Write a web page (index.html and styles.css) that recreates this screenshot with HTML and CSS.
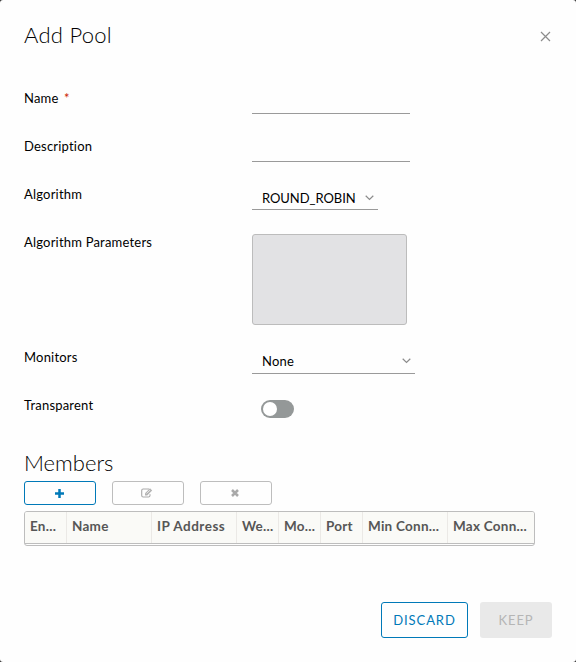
FILE: index.html
```html
<!DOCTYPE html>
<html lang="en">
<head>
<meta charset="utf-8">
<title>Add Pool</title>
<link rel="stylesheet" href="styles.css">
</head>
<body>
<main class="modal">
  <header class="modal-header">
    <h1 class="title">Add Pool</h1>
    <button class="close" aria-label="Close"><svg width="11" height="11" viewBox="0 0 11 11"><path d="M1 1 10 10M10 1 1 10"/></svg></button>
  </header>
  <form class="form">
    <div class="row"><label>Name <span class="required">*</span></label><input class="field" type="text"></div>
    <div class="row"><label>Description</label><input class="field" type="text"></div>
    <div class="row"><label>Algorithm</label><div class="select select-short"><span class="caps">ROUND_ROBIN</span><svg width="9" height="6" viewBox="0 0 9 6"><path d="M.7.8 4.5 4.5 8.3.8"/></svg></div></div>
    <div class="row row-tall"><label>Algorithm Parameters</label><textarea class="params" disabled></textarea></div>
    <div class="row"><label>Monitors</label><div class="select"><span>None</span><svg width="9" height="6" viewBox="0 0 9 6"><path d="M.7.8 4.5 4.5 8.3.8"/></svg></div></div>
    <div class="row"><label>Transparent</label><div class="toggle"><div class="knob"></div></div></div>
  </form>
  <section class="members">
    <h2 class="title">Members</h2>
    <div class="tools">
      <button type="button" class="tool tool-add" aria-label="Add"><svg width="9" height="9" viewBox="0 0 9 9"><path d="M4.5 0v9M0 4.5h9"/></svg></button>
      <button type="button" class="tool" disabled aria-label="Edit"><svg class="edit" width="12" height="10" viewBox="0 0 12 10"><path d="M8 1H2.2Q.7 1 .7 2.4v5.2Q.7 9 2.2 9h5.2Q9 9 9 7.6V6.3"/><path class="pencil" d="M4 5.3 9 .3 11.2 2.5 6.2 7.5H4z"/><path class="shine" d="M5.6 5.5 9 2.1"/></svg></button>
      <button type="button" class="tool" disabled aria-label="Delete"><svg width="8" height="8" viewBox="0 0 8 8"><path d="M1 1 7 7M7 1 1 7"/></svg></button>
    </div>
    <div class="grid">
      <div class="grid-head">
        <span>En...</span><span>Name</span><span class="wide">IP Address</span><span>We...</span><span>Mo...</span><span>Port</span><span>Min Conn...</span><span>Max Conn...</span>
      </div>
    </div>
  </section>
  <footer class="actions">
    <button class="button discard">DISCARD</button>
    <button class="button keep" disabled>KEEP</button>
  </footer>
</main>
</body>
</html>
```
FILE: styles.css
```css
* { box-sizing: border-box; }
body { margin: 0; background: #313131; font-family: Lato, "Liberation Sans", sans-serif; color: #000; }
button { margin: 0; padding: 0; font-family: inherit; background: none; border: 0; }
svg { display: block; fill: none; stroke: #8c8c8c; stroke-width: 1.2; }
.modal { width: 576px; height: 662px; padding: 24px; background: #fefefe; border-radius: 3px; display: flex; flex-direction: column; }
.modal-header { display: flex; justify-content: space-between; height: 61px; }
.title { margin: 0; font-size: 22px; font-weight: 300; line-height: 24px; letter-spacing: .15px; }
.modal-header .title { line-height: 22px; letter-spacing: .25px; }
.members .title { letter-spacing: 0; }
.close { width: 13px; height: 25px; display: flex; align-items: center; justify-content: center; }
.form { display: flex; flex-direction: column; }
.row { display: grid; grid-template-columns: 228px auto; justify-content: start; align-items: start; height: 48px; }
.row-tall { height: 115px; }
label { font-size: 13px; line-height: 27px; letter-spacing: .2px; }
.required { color: #c92100; margin-left: 2px; }
.field { width: 158px; height: 29px; padding: 0; border: 0; border-bottom: 1px solid #9a9a9a; background: transparent; outline: 0; }
.select { width: 163px; height: 30px; padding: 5px 4px 0 10px; border-bottom: 1px solid #9a9a9a; display: flex; justify-content: space-between; align-items: center; font-size: 13px; line-height: 20px; letter-spacing: .2px; }
.select-short { width: 126px; height: 29px; }
.caps { letter-spacing: -.05px; }
.params { width: 155px; height: 91px; margin-top: 5px; border: 1px solid #bcbcbc; border-radius: 3px; background: #e2e2e4; resize: none; }
.toggle { width: 33px; height: 18px; margin: 8px 0 0 9px; padding: 2px; border-radius: 9px; background: #949898; }
.knob { width: 14px; height: 14px; border-radius: 50%; background: #fff; }
.members { padding-top: 11px; }
.tools { display: flex; gap: 16px; margin-top: 6px; }
.tool { width: 72px; height: 24px; padding-right: 2px; border: 1px solid #bdbdbd; border-radius: 3px; display: flex; align-items: center; justify-content: center; }
.tool svg { stroke: #a9a9a9; stroke-width: 2.5; }
.tool .edit { stroke-width: 1.1; }
.edit .pencil { fill: #b3b3b3; stroke: none; }
.edit .shine { stroke: #fff; stroke-width: .7; }
.tool-add { padding-right: 1px; border-color: #0079b8; }
.tool-add svg { stroke: #0079b8; }
.grid { width: 511px; height: 35px; margin-top: 6px; border: 1px solid #bdbdbd; border-radius: 3px; }
.grid-head { height: 32px; display: grid; grid-template-columns: 42px 85px 85px 42px 42px 42px 85px 86px; border-bottom: 1px solid #bdbdbd; background: #fafaf7; border-radius: 2px 2px 0 0; }
.grid-head span { padding-left: 5px; border-right: 1px solid #ebe9e6; white-space: nowrap; font-size: 13.5px; font-weight: 700; line-height: 29px; letter-spacing: .25px; color: #565656; }
.grid-head .wide { letter-spacing: .5px; }
.grid-head span:last-child { border-right: 0; }
.actions { margin-top: auto; display: flex; justify-content: flex-end; gap: 12px; }
.button { height: 36px; border-radius: 3px; font-size: 13px; letter-spacing: .9px; line-height: 34px; }
.discard { width: 87px; border: 1px solid #0079b8; color: #0079b8; }
.keep { width: 72px; background: #e9e9e9; color: #b5b5b5; }
```
